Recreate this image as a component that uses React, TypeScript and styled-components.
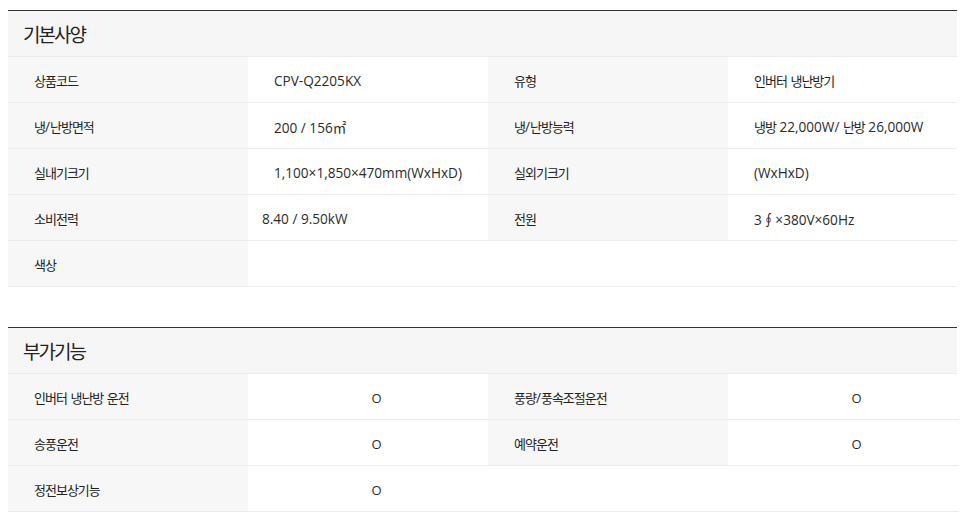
import React from "react";
import styled, { createGlobalStyle } from "styled-components";

const Global = createGlobalStyle`
  html, body { margin: 0; padding: 0; background: #fff; }
  body { font-family: "Open Sans", "Noto Sans CJK KR", sans-serif; color: #333; }
`;

const Page = styled.div`
  width: 949px;
  padding: 10px 0 0 8px;
  display: flex;
  flex-direction: column;
  gap: 40px;
`;

const Section = styled.section`
  border-top: 1px solid #333;
`;

const Title = styled.h2`
  margin: 0;
  height: 45px;
  padding-left: 15px;
  display: flex;
  align-items: center;
  background: #f6f6f6;
  border-bottom: 1px solid #ececec;
  font-family: "Noto Sans CJK KR", sans-serif;
  font-size: 19px;
  font-weight: 400;
  color: #222;
  letter-spacing: -2px;
`;

const Grid = styled.div`
  display: grid;
  grid-template-columns: 240px 240px 240px 1fr;
`;

const Cell = styled.div<{ $label?: boolean; $span?: number; $pad?: number }>`
  height: 46px;
  box-sizing: border-box;
  border-bottom: 1px solid #ececec;
  display: flex;
  align-items: center;
  padding-left: ${(p) => p.$pad ?? 26}px;
  padding-top: 2px;
  background: ${(p) => (p.$label ? "#f7f7f7" : "#fff")};
  grid-column: span ${(p) => p.$span ?? 1};
  font-size: 13.6px;
  color: #2b2b2b;
  white-space: pre;
`;

const Line = styled.span`
  display: inline-block;
`;

const Hangul = styled.span`
  font-family: "Noto Sans CJK KR", sans-serif;
  font-size: 13px;
  letter-spacing: -1px;
  color: #222;
`;

const Mark = styled.span`
  display: inline-block;
  width: 205px;
  text-align: center;
  font-size: 13px;
`;

const HANGUL = /([\uAC00-\uD7A3\u3130-\u318F]+)/;

const Text = ({ children }: { children: string }) => (
  <Line>
    {children.split(HANGUL).map((part, i) =>
      i % 2 === 1 ? <Hangul key={i}>{part}</Hangul> : part
    )}
  </Line>
);

type Spec = { label: string; value: string; pad?: number };

const specs: Spec[][] = [
  [
    { label: "상품코드", value: "CPV-Q2205KX" },
    { label: "유형", value: "인버터 냉난방기" },
  ],
  [
    { label: "냉/난방면적", value: "200 / 156㎡" },
    { label: "냉/난방능력", value: "냉방 22,000W/ 난방 26,000W" },
  ],
  [
    { label: "실내기크기", value: "1,100×1,850×470mm(WxHxD)" },
    { label: "실외기크기", value: "(WxHxD)" },
  ],
  [
    { label: "소비전력", value: "8.40 / 9.50kW", pad: 14 },
    { label: "전원", value: "3∮×380V×60Hz" },
  ],
];

const features: string[][] = [
  ["인버터 냉난방 운전", "풍량/풍속조절운전"],
  ["송풍운전", "예약운전"],
  ["정전보상기능"],
];

export default function App() {
  return (
    <>
      <Global />
      <Page>
        <Section>
          <Title>기본사양</Title>
          <Grid>
            {specs.map((row, i) =>
              row.map((s, j) => (
                <React.Fragment key={`${i}-${j}`}>
                  <Cell $label>
                    <Text>{s.label}</Text>
                  </Cell>
                  <Cell $pad={s.pad}>
                    <Text>{s.value}</Text>
                  </Cell>
                </React.Fragment>
              ))
            )}
            <Cell $label>
              <Text>색상</Text>
            </Cell>
            <Cell $span={3} />
          </Grid>
        </Section>
        <Section>
          <Title>부가기능</Title>
          <Grid>
            {features.map((row, i) => (
              <React.Fragment key={i}>
                {row.map((f, j) => (
                  <React.Fragment key={j}>
                    <Cell $label>
                      <Text>{f}</Text>
                    </Cell>
                    <Cell>
                      <Mark>O</Mark>
                    </Cell>
                  </React.Fragment>
                ))}
                {row.length === 1 && <Cell $span={2} />}
              </React.Fragment>
            ))}
          </Grid>
        </Section>
      </Page>
    </>
  );
}
